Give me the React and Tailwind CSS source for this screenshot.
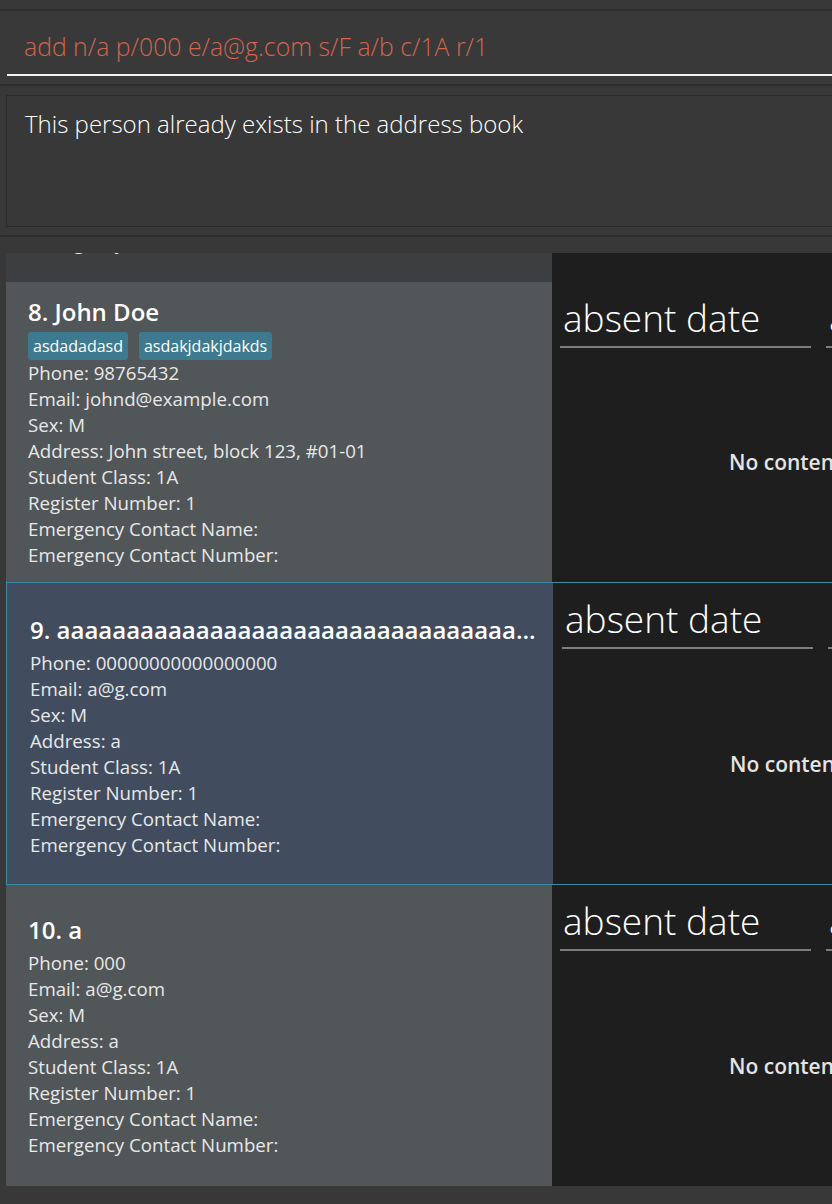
import React from "react";

const FONT = { fontFamily: '"Open Sans", "Noto Sans", sans-serif' };

function RightPanel({ shift = false }) {
  return (
    <div className="w-[600px] shrink-0 bg-[#1e1e1e] flex flex-col">
      <div className={`flex gap-[15px] ${shift ? "pl-[9px]" : "pl-[8px]"} pt-[14px]`}>
        {[0, 1].map((i) => (
          <div
            key={i}
            className="w-[251px] h-[52px] border-b-2 border-[#7d7d7d] pl-[3px] text-[37px] leading-[44px] font-light text-white whitespace-nowrap overflow-hidden"
          >
            absent date
          </div>
        ))}
      </div>
      <div className="flex-1 flex items-center pl-[177px] pb-[4px]">
        <span className="text-[21px] font-semibold text-[#e4e4e4] whitespace-nowrap">
          No content in table
        </span>
      </div>
    </div>
  );
}

function Card({ name, tags = [], lines, bg, selected = false, height, extra = "" }) {
  return (
    <div
      className={`flex shrink-0 ${selected ? "border border-[#3a8ba4]" : ""}`}
      style={{ height }}
    >
      <div
        className={`w-[546px] shrink-0 flex flex-col justify-center ${bg} ${
          selected ? "pl-[23px] pt-[4px]" : "pl-[22px]"
        } pr-[12px] ${extra}`}
      >
        <div className="h-[32px] leading-[32px] text-[24px] font-semibold text-white truncate mb-[4px]">
          {name}
        </div>
        {tags.length > 0 && (
          <div className="h-[28px] flex gap-[11px]">
            {tags.map((t) => (
              <span
                key={t}
                className="h-[28px] leading-[28px] px-[5px] rounded-[3px] bg-[#3e7a8f] text-white text-[16px]"
              >
                {t}
              </span>
            ))}
          </div>
        )}
        {lines.map((l, i) => (
          <div key={i} className="h-[26px] leading-[26px] text-[18.7px] text-[#e8e8e8] whitespace-nowrap">
            {l}
          </div>
        ))}
      </div>
      <RightPanel shift={selected} />
    </div>
  );
}

const common = (phone, email, address) => [
  `Phone: ${phone}`,
  `Email: ${email}`,
  "Sex: M",
  `Address: ${address}`,
  "Student Class: 1A",
  "Register Number: 1",
  "Emergency Contact Name:",
  "Emergency Contact Number:",
];

export default function App() {
  return (
    <div className="w-[832px] h-[1204px] bg-[#383838] overflow-hidden flex flex-col" style={FONT}>
      <div className="h-[9px] shrink-0" />
      <div className="h-[2px] shrink-0 bg-[#2d2d2d]" />
      {/* command box */}
      <div className="h-[73px] shrink-0 pl-[7px] flex flex-col bg-[#393939]">
        <div className="h-[63px] pl-[17px] pt-[20px] text-[24.8px] leading-[30px] font-light text-[#d2654f] whitespace-nowrap">
          add n/a p/000 e/a@g.com s/F a/b c/1A r/1
        </div>
        <div className="h-[2px] bg-[#f2f2f2]" />
      </div>
      <div className="h-[2px] shrink-0 bg-[#2d2d2d]" />
      <div className="h-[9px] shrink-0" />
      {/* result box */}
      <div className="h-[132px] shrink-0 pl-[6px] flex">
        <div className="w-[900px] shrink-0 border border-[#2b2b2b] bg-[#383838] pl-[18px] pt-[13px] text-[24px] leading-[30px] font-light text-white whitespace-nowrap">
          This person already exists in the address book
        </div>
      </div>
      <div className="h-[8px] shrink-0" />
      <div className="h-[2px] shrink-0 bg-[#2d2d2d]" />
      <div className="h-[16px] shrink-0" />
      {/* list */}
      <div className="h-[933px] shrink-0 pl-[6px] overflow-hidden flex flex-col">
        <div className="flex flex-col mt-[-270px]">
          <Card
            name="7. Roy Balakrishnan"
            lines={common("92624417", "royb@example.com", "Blk 45 Aljunied Street 85, #11-31")}
            bg="bg-[#3c3e3f]"
            height={299}
            extra="pt-[3px]"
          />
          <Card
            name="8. John Doe"
            tags={["asdadadasd", "asdakjdakjdakds"]}
            lines={common("98765432", "johnd@example.com", "John street, block 123, #01-01")}
            bg="bg-[#515658]"
            height={300}
          />
          <Card
            name={"9. " + "a".repeat(60)}
            lines={common("00000000000000000", "a@g.com", "a")}
            bg="bg-[#414d5f]"
            selected
            height={303}
          />
          <Card
            name="10. a"
            lines={common("000", "a@g.com", "a")}
            bg="bg-[#515658]"
            height={301}
          />
        </div>
      </div>
    </div>
  );
}
